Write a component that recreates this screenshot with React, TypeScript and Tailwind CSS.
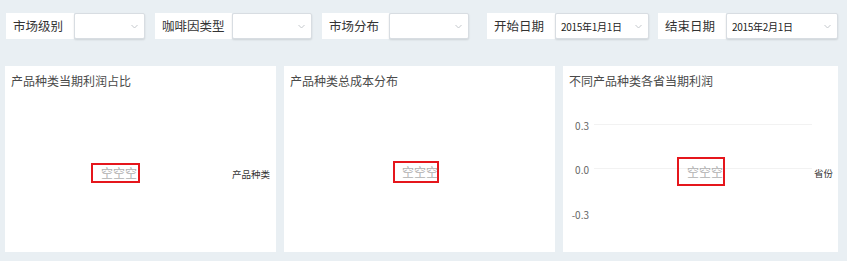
import { ReactNode } from 'react';

const filters = [
  { label: '市场级别', labelW: 'w-[68px]', selectW: 'w-[71px]', value: '', gap: 'mr-[10px]' },
  { label: '咖啡因类型', labelW: 'w-[77px]', selectW: 'w-[80px]', value: '', gap: 'mr-[10px]' },
  { label: '市场分布', labelW: 'w-[67px]', selectW: 'w-[80px]', value: '', gap: 'mr-[18px]' },
  { label: '开始日期', labelW: 'w-[68px]', selectW: 'w-[94px]', value: '2015年1月1日', gap: 'mr-[9px]' },
  { label: '结束日期', labelW: 'w-[68px]', selectW: 'w-[112px]', value: '2015年2月1日', gap: '' },
];

function Chevron() {
  return (
    <svg width="7" height="5" viewBox="0 0 7 5" className="shrink-0">
      <path d="M0.5 1 L3.5 4 L6.5 1" fill="none" stroke="#c4c8cc" strokeWidth="1" />
    </svg>
  );
}

function Filter({ label, labelW, selectW, value, gap }: (typeof filters)[number]) {
  return (
    <div className={`flex h-[26px] ${gap}`}>
      <div className={`${labelW} bg-white pl-[7px] flex items-center text-[12.5px] text-[#333]`}>{label}</div>
      <div
        className={`${selectW} bg-white border border-[#d8dde2] rounded-[2px] shadow-[0_1px_2px_rgba(0,0,0,0.12)] flex items-center justify-between pl-[5px] pr-[6px]`}
      >
        <span className="text-[10px] text-[#222] tracking-[-0.3px] whitespace-nowrap">{value}</span>
        <Chevron />
      </div>
    </div>
  );
}

function Panel({ title, width, children }: { title: string; width: string; children?: ReactNode }) {
  return (
    <div className={`${width} h-[186px] bg-white relative shrink-0`}>
      <div className="pl-[6px] pt-[7px] text-[12px] leading-[16px] text-[#4a4a4a]">{title}</div>
      {children}
    </div>
  );
}

function EmptyMark({ className, pad }: { className: string; pad: string }) {
  return (
    <div className={`border-2 border-[#e5161c] flex items-center shrink-0 ${pad} ${className}`}>
      <span className="text-[12px] leading-none text-[#b0b0b0] whitespace-nowrap">空空空</span>
    </div>
  );
}

const ticks = [
  { v: '0.3', line: true },
  { v: '0.0', line: true },
  { v: '-0.3', line: false },
];

export default function App() {
  return (
    <div className="w-[847px] h-[261px] bg-[#e9eff3] overflow-hidden font-['Noto_Sans_CJK_SC','Noto_Sans',sans-serif]">
      {/* filter bar */}
      <div className="flex pl-[6px] pt-[13px]">
        {filters.map((f) => (
          <Filter key={f.label} {...f} />
        ))}
      </div>

      {/* charts */}
      <div className="flex gap-[8px] pl-[5px] mt-[27px]">
        <Panel title="产品种类当期利润占比" width="w-[271px]">
          <div className="mt-[74px] h-[20px] flex items-center">
            <EmptyMark className="ml-[86px] w-[49px] h-[20px]" pad="pl-[8px]" />
            <span className="ml-auto mr-[6px] mt-[2px] text-[9.5px] text-[#333]">产品种类</span>
          </div>
        </Panel>

        <Panel title="产品种类总成本分布" width="w-[271px]">
          <div className="mt-[72px] flex">
            <EmptyMark className="ml-[109px] w-[46px] h-[22px]" pad="pl-[7px]" />
          </div>
        </Panel>

        <Panel title="不同产品种类各省当期利润" width="w-[275px]">
          <div className="mt-[14px] flex flex-col">
            {ticks.map((t) => (
              <div key={t.v} className="h-[44.5px] flex items-center">
                <span className="w-[26px] text-right text-[10px] text-[#666]">{t.v}</span>
                {t.line && <div className="ml-[5px] w-[218px] h-px bg-[#f2f2f2] -mt-[2px]" />}
                {t.v === '0.0' && <span className="ml-[2px] mt-[7px] text-[9.5px] text-[#333]">省份</span>}
              </div>
            ))}
          </div>
          <EmptyMark className="absolute left-[114px] top-[91px] w-[48px] h-[29px]" pad="pl-[8px]" />
        </Panel>
      </div>
    </div>
  );
}
